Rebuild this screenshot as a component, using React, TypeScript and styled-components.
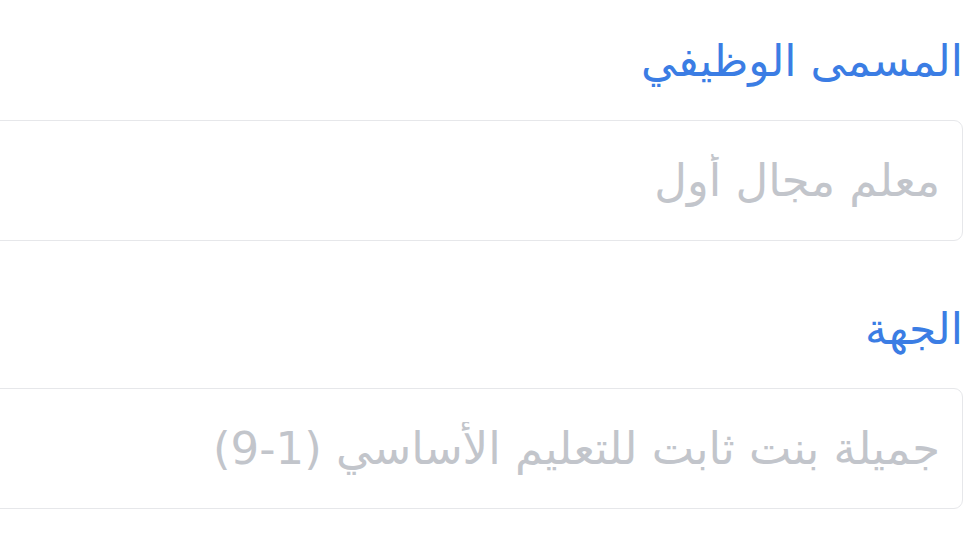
import styled, { createGlobalStyle } from 'styled-components';

const GlobalStyle = createGlobalStyle`
  html, body {
    margin: 0;
    padding: 0;
    background: #ffffff;
    overflow: hidden;
  }
  body {
    font-family: "DejaVu Sans", "Noto Sans", sans-serif;
  }
`;

const Form = styled.form`
  direction: rtl;
  width: 965px;
  height: 544px;
  padding: 25px 2px 0 0;
  box-sizing: border-box;
  display: flex;
  flex-direction: column;
  gap: 52px;
  overflow: hidden;
`;

const Field = styled.div`
  display: flex;
  flex-direction: column;
  align-items: flex-start;
  gap: 23px;
`;

const Label = styled.label`
  font-size: 44px;
  line-height: 72px;
  color: #3b7de4;
`;

const Input = styled.input`
  width: 1040px;
  height: 121px;
  box-sizing: border-box;
  border: 1.5px solid #e6e7ea;
  border-radius: 9px;
  background: #ffffff;
  padding: 0 22px 0 26px;
  font-family: inherit;
  font-size: 45px;
  direction: rtl;
  outline: none;
  &::placeholder {
    color: #c2c5cb;
  }
`;

const fields = [
  { id: 'title', label: 'المسمى الوظيفي', placeholder: 'معلم مجال أول' },
  { id: 'org', label: 'الجهة', placeholder: 'جميلة بنت ثابت للتعليم الأساسي (1-9)' },
];

export default function App() {
  return (
    <>
      <GlobalStyle />
      <Form>
        {fields.map((f) => (
          <Field key={f.id}>
            <Label htmlFor={f.id}>{f.label}</Label>
            <Input id={f.id} placeholder={f.placeholder} />
          </Field>
        ))}
      </Form>
    </>
  );
}
